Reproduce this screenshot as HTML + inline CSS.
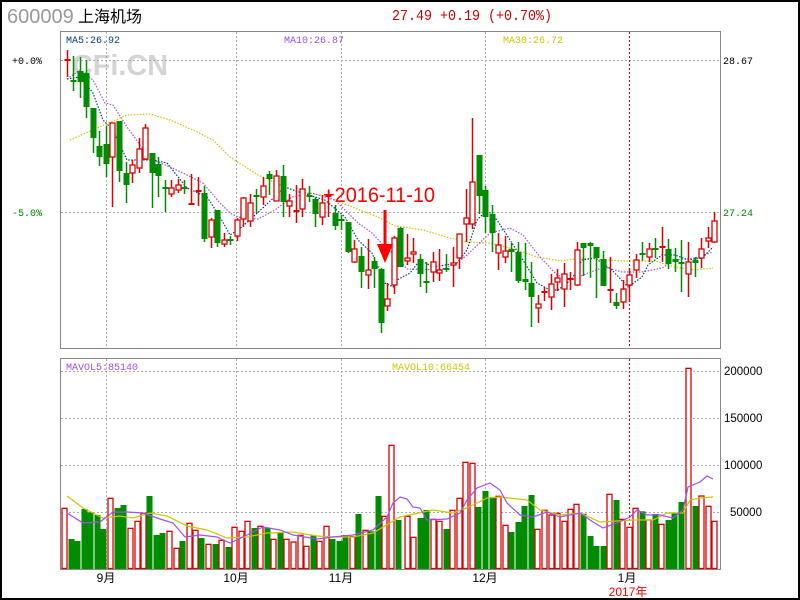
<!DOCTYPE html>
<html><head><meta charset="utf-8"><style>
html,body{margin:0;padding:0;background:#fff}
svg{display:block}
</style></head><body>
<svg id="s" width="800" height="600" xmlns="http://www.w3.org/2000/svg" font-family="Liberation Sans, sans-serif">
<rect x="1" y="1" width="798" height="598" fill="#fff" stroke="#000" stroke-width="2"/>
<text x="7" y="23" font-size="20" fill="#999">600009</text>
<text x="78" y="22" font-size="16" fill="#000" font-family="Liberation Sans, Noto Sans CJK SC, sans-serif">上海机场</text>
<text x="392" y="20" font-size="15" fill="#cc0000" font-family="Liberation Mono, monospace" textLength="160" lengthAdjust="spacingAndGlyphs">27.49 +0.19 (+0.70%)</text>
<text x="72" y="75" font-size="29" font-weight="bold" fill="#d4d4d4" textLength="96" lengthAdjust="spacingAndGlyphs">CFi.CN</text>
<g id="grid" stroke="#aaa" stroke-dasharray="2,2" stroke-width="1">
<line x1="61" y1="60.5" x2="720" y2="60.5"/><line x1="61" y1="212.5" x2="720" y2="212.5"/>
<line x1="61" y1="371.5" x2="720" y2="371.5"/><line x1="61" y1="418.5" x2="720" y2="418.5"/><line x1="61" y1="465.5" x2="720" y2="465.5"/><line x1="61" y1="512.5" x2="720" y2="512.5"/>
<line x1="106.5" y1="32" x2="106.5" y2="348"/><line x1="236.5" y1="32" x2="236.5" y2="348"/><line x1="341.5" y1="32" x2="341.5" y2="348"/><line x1="485.5" y1="32" x2="485.5" y2="348"/>
<line x1="106.5" y1="359" x2="106.5" y2="569"/><line x1="236.5" y1="359" x2="236.5" y2="569"/><line x1="341.5" y1="359" x2="341.5" y2="569"/><line x1="485.5" y1="359" x2="485.5" y2="569"/>
</g>
<g stroke="#e00000" stroke-dasharray="2,2"><line x1="629.5" y1="32" x2="629.5" y2="348"/><line x1="629.5" y1="359" x2="629.5" y2="569"/></g>
<g id="lines"></g>
<g id="cand"></g>
<rect x="60.5" y="31.5" width="660" height="317" fill="none" stroke="#888"/>
<rect x="60.5" y="358.5" width="660" height="211" fill="none" stroke="#888"/>
<g font-family="Liberation Mono, monospace" font-size="10">
<text x="66" y="43" fill="#004080">MA5:26.92</text>
<text x="284" y="43" fill="#a050f0">MA10:26.87</text>
<text x="503" y="43" fill="#c8c800">MA30:26.72</text>
<text x="66" y="370" fill="#a050f0">MAVOL5:85140</text>
<text x="392" y="370" fill="#c8c800">MAVOL10:66454</text>
<text x="12" y="64" fill="#000">+0.0%</text>
<text x="12" y="216" fill="#008000">-5.0%</text>
<text x="723" y="64" fill="#000">28.67</text>
<text x="723" y="216" fill="#008000">27.24</text>
</g>
<g font-size="11.5" fill="#000">
<text x="724" y="375">200000</text><text x="724" y="422">150000</text><text x="724" y="469">100000</text><text x="730" y="516">50000</text>
</g>
<g font-size="12" fill="#000" font-family="Liberation Sans, Noto Sans CJK SC, sans-serif" text-anchor="middle">
<text x="106" y="582">9月</text><text x="236" y="582">10月</text><text x="341" y="582">11月</text><text x="485" y="582">12月</text><text x="627" y="582">1月</text>
<text x="628" y="596" fill="#ff0000">2017年</text>
</g>
<text x="323" y="202" font-size="21" fill="#ff0000" textLength="112" lengthAdjust="spacingAndGlyphs">+2016-11-10</text>
<line x1="385" y1="210" x2="385" y2="250" stroke="#ff0000" stroke-width="3"/>
<polygon points="377,244 393,244 385,263" fill="#ff0000"/>
</svg>
<script>
var NS="http://www.w3.org/2000/svg",R="#dd0000",G="#008c00";
function el(p,t,a){var e=document.createElementNS(NS,t);for(var k in a)e.setAttribute(k,a[k]);p.appendChild(e);return e;}
var C=document.getElementById("cand"),L=document.getElementById("lines");
var cd=[[50,77,60,61,1],[56,91,80,82,0],[57,98,71,82,0],[60,118,73,107,0],[108,153,108,138,0],[131,166,146,157,0],[126,177,144,164,0],[123,207,123,157,1],[121,182,121,171,0],[162,203,173,185,0],[160,183,165,173,1],[138,173,149,168,1],[124,160,128,159,1],[153,208,153,173,0],[157,197,164,176,0],[180,212,188,188,0],[180,197,188,194,1],[179,193,185,190,1],[180,194,188,188,0],[174,205,204,204,1],[177,206,191,191,1],[186,242,193,239,0],[218,248,220,237,1],[210,247,210,243,0],[233,247,240,244,1],[236,245,240,240,0],[218,241,220,236,1],[197,227,198,219,1],[194,227,203,221,1],[189,213,195,197,0],[177,205,186,197,1],[171,195,174,179,0],[170,201,176,201,1],[165,217,176,202,0],[194,217,201,206,1],[185,223,211,211,1],[179,217,189,209,1],[186,202,196,196,0],[197,227,199,214,0],[195,225,203,217,1],[190,217,196,196,1],[205,230,213,226,0],[215,230,220,220,0],[222,253,222,252,0],[240,263,249,262,1],[247,288,256,272,0],[239,289,270,275,1],[257,288,261,269,0],[268,333,269,323,0],[283,311,299,306,1],[236,294,238,285,1],[227,267,228,267,0],[234,265,258,261,1],[238,263,252,254,1],[254,287,259,274,0],[262,293,282,282,0],[252,282,262,272,1],[249,281,270,273,1],[254,272,269,269,0],[247,287,263,265,1],[234,269,234,258,1],[189,242,218,224,1],[118,229,182,224,1],[155,214,155,196,0],[186,233,190,217,0],[205,252,214,233,0],[233,270,245,253,1],[236,263,251,257,1],[243,272,249,252,0],[242,283,252,281,0],[243,290,279,282,0],[262,327,283,297,0],[295,323,304,308,1],[287,301,292,292,1],[274,310,284,297,1],[269,291,278,282,1],[263,307,274,289,1],[272,290,279,279,1],[242,286,250,285,1],[243,276,243,248,0],[242,278,243,246,0],[247,298,247,258,0],[251,286,259,286,0],[257,303,290,290,1],[293,309,302,306,0],[280,309,289,302,1],[268,302,275,285,1],[254,278,260,270,1],[242,261,253,255,0],[243,262,249,257,1],[238,258,249,249,0],[227,262,247,248,1],[239,269,249,264,0],[248,272,259,262,0],[240,292,262,264,0],[242,297,262,274,1],[257,277,260,263,0],[238,268,249,258,1],[227,248,238,241,1],[212,243,221,242,1]];
function pl(pts,col,dash){el(L,"polyline",{points:pts,fill:"none",stroke:col,"stroke-width":1.2,"stroke-dasharray":dash});}
pl("70,140 127,115 150,114 170,120 193,130 213,140 230,157 258,175 292,190 325,196 352,207 378,217 395,226 423,230 450,238 467,242 490,243 517,250 537,257 560,261 582,258 622,261 655,261 675,267 695,270 713,268","#c8c800","1.5,1.5");
pl("67,79 80,70 93,80 105,103 113,105 127,127 140,145 153,160 170,167 183,173 203,183 220,203 230,213 238,217 258,219 275,210 292,197 312,193 335,200 358,223 372,233 385,247 395,255 407,269 440,270 457,263 467,255 490,233 510,228 523,235 540,257 557,275 572,280 588,273 605,267 622,272 642,272 662,268 675,260 695,258 713,252","#a050f0","1.5,1.5");
pl("67,79 80,77 93,93 103,120 113,130 127,160 140,160 153,160 167,163 187,188 207,197 220,217 230,235 238,230 252,218 268,203 285,187 302,193 325,200 345,217 358,240 372,253 385,283 393,287 397,280 410,273 420,260 433,267 457,263 467,250 477,220 487,210 497,220 510,240 523,260 537,283 550,290 558,290 572,279 582,260 595,258 612,270 628,287 642,277 648,265 662,255 675,255 688,260 702,258 713,247","#004080","1.5,1.5");
cd.forEach(function(c,i){var x=Math.round(66.7+6.54*i)+0.5,col=c[4]?R:G;
el(C,"line",{x1:x,y1:c[0],x2:x,y2:c[1],stroke:col,"stroke-width":1.5});
if(c[3]-c[2]<2){el(C,"rect",{x:x-3,y:c[2]-1,width:6,height:2,fill:col});}
else if(c[4]){el(C,"rect",{x:x-2.5,y:c[2],width:5,height:c[3]-c[2],fill:"#fff",stroke:col,"stroke-width":1.3});}
else{el(C,"rect",{x:x-3,y:c[2],width:6,height:c[3]-c[2],fill:col});}});
var v1=[[193,505,1],[213,597,0],[232,603,0],[252,507,0],[271,517,0],[291,525,0],[310,567,0],[331,475,1],[351,504,0],[370,495,0],[390,565,1],[410,544,1],[430,520,1],[447,468,0],[468,585,0],[487,579,0],[508,574,1],[527,625,1],[547,603,0],[566,550,1],[585,571,1],[604,594,0],[625,613,1],[645,612,0],[664,601,1],[684,621,0],[703,562,1],[723,574,1],[742,544,1],[762,564,0],[781,559,1],[801,564,0],[820,598,1],[840,577,0],[859,598,1],[879,606,1],[899,586,1],[918,619,1],[938,586,0],[958,604,1],[978,559,1],[997,597,0],[1016,603,0],[1036,585,0],[1055,590,1],[1075,522,0],[1095,571,1],[1114,574,0],[1134,468,0],[1153,529,1],[1174,316,1],[1193,540,0]];
var v2=[[20,529,1],[40,592,1],[60,534,0],[79,510,0],[99,538,1],[118,544,1],[138,567,0],[157,511,1],[177,475,1],[196,367,1],[215,370,1],[235,501,0],[255,453,0],[275,471,0],[295,469,1],[314,556,1],[334,576,0],[353,546,0],[373,498,0],[393,465,0],[412,568,1],[432,511,1],[452,525,1],[471,520,1],[491,544,1],[510,508,1],[529,493,1],[549,521,0],[569,588,0],[588,618,0],[608,618,0],[628,463,1],[647,480,0],[667,538,1],[686,562,1],[706,505,1],[726,514,0],[745,540,1],[765,522,0],[784,553,1],[804,540,0],[823,520,0],[843,486,0],[863,85,1],[884,498,0],[903,468,1],[923,499,1],[942,544,1]];
function vb(x,zy,r){var y=340+zy/3;x=Math.round(x)+0.5;
if(r)el(C,"rect",{x:x-2.5,y:y,width:5,height:568.5-y,fill:"#fff",stroke:R,"stroke-width":1.3});
else el(C,"rect",{x:x-3,y:y,width:6,height:569-y,fill:G});}
v1.forEach(function(v){vb(v[0]/3,v[1],v[2]);});v2.forEach(function(v){vb(400+v[0]/3,v[1],v[2]);});
var V=document.getElementById("cand");
function vl(p,c){el(V,"polyline",{points:p,fill:"none",stroke:c,"stroke-width":1.2});}
vl("67,496 83,508 103,518 120,516 133,518 150,513 167,516 187,526 207,530 227,538 247,537 267,533 293,532 317,536 333,537 353,537 373,533 400,517 433,510 453,513 467,508 487,498 500,497 527,500 540,510 560,515 580,513 600,522 633,520 653,520 667,513 683,513 690,500 700,498 713,497","#c8c800");
vl("67,513 83,523 100,522 113,512 127,512 143,513 160,519 173,523 185,537 200,535 217,537 230,543 247,535 263,527 280,530 293,535 317,539 333,537 353,535 373,530 387,517 393,503 400,497 407,499 413,507 420,508 427,520 447,519 460,513 467,500 477,488 490,483 500,490 507,503 520,515 533,517 547,512 560,517 580,513 593,522 603,528 617,523 630,517 637,510 647,515 660,515 673,518 683,510 688,487 700,482 707,476 713,479","#a050f0");
</script>
</body></html>
